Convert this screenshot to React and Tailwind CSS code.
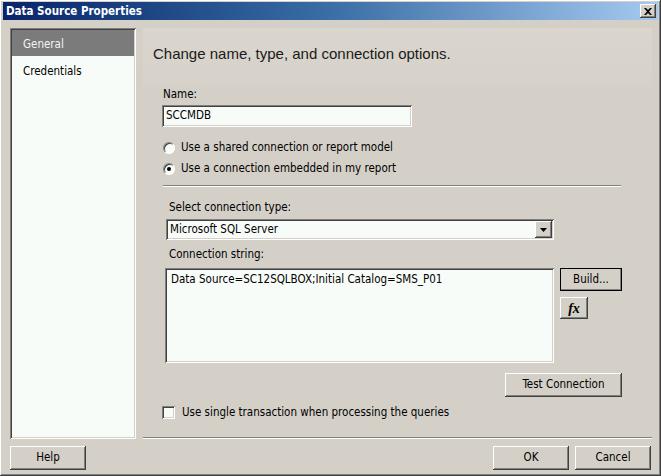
import React from 'react';

const raised =
  'bg-[#d4d0c8] shadow-[inset_-1px_-1px_#404040,inset_1px_1px_#ffffff,inset_-2px_-2px_#808080,inset_2px_2px_#d4d0c8]';
const sunken =
  'bg-[#f8fcf8] shadow-[inset_1px_1px_#808080,inset_-1px_-1px_#ffffff,inset_2px_2px_#404040,inset_-2px_-2px_#d4d0c8]';

function Button({ children, className = '', primary = false }) {
  return (
    <button
      className={`${raised} ${primary ? 'outline outline-1 outline-black -outline-offset-1' : ''} flex items-center justify-center text-black ${className}`}
    >
      {children}
    </button>
  );
}

function Radio({ checked, label }) {
  return (
    <label className="flex items-center h-[21px]">
      <span className="w-[12px] h-[12px] rounded-full bg-[#f8fcf8] border border-t-[#808080] border-l-[#808080] border-b-white border-r-white flex items-center justify-center shadow-[inset_1px_1px_#404040]">
        {checked && <span className="w-[4px] h-[4px] rounded-full bg-black" />}
      </span>
      <span className="ml-[6px] pt-[1px]">{label}</span>
    </label>
  );
}

export default function App() {
  return (
    <div className="w-[661px] h-[476px] bg-[#d4d0c8] flex flex-col overflow-hidden font-['DejaVu_Sans_Condensed','Liberation_Sans',sans-serif] text-[11.5px] text-black shadow-[inset_-1px_-1px_#404040,inset_1px_1px_#ffffff,inset_-2px_-2px_#808080]">
      {/* title bar */}
      <div className="mx-[3px] mt-[2px] h-[18px] bg-gradient-to-r from-[#0a246a] via-[#3a6ea5] to-[#a6caf0] flex items-center justify-between pl-[3px] pr-[2px]">
        <span className="text-white font-bold text-[11.5px] pt-[1px]">Data Source Properties</span>
        <span className={`${raised} w-[16px] h-[14px] flex items-center justify-center`}>
          <svg width="8" height="7" viewBox="0 0 8 7">
            <path d="M0 0h2l2 2 2-2h2L5 3.5 8 7H6L4 5 2 7H0l3-3.5z" fill="#000" />
          </svg>
        </span>
      </div>

      {/* body */}
      <div className="flex flex-1 pt-[8px] pl-[10px]">
        {/* left nav */}
        <div className={`${sunken} w-[126px] h-[411px] p-[2px]`}>
          <div className="h-[26px] bg-[#7b7b7b] text-[#f4f4f4] flex items-center pl-[11px] pt-[4px]">General</div>
          <div className="h-[28px] flex items-center pl-[11px] pt-[4px]">Credentials</div>
        </div>

        {/* right column */}
        <div className="flex-1 ml-[7px] mr-[9px] flex flex-col">
          <div className="h-[59px] bg-gradient-to-b from-[#dad6ce] to-[#d6d2ca] pl-[10px] pb-[7px] flex items-center">
            <span className="text-[15px] text-[#1a1a1a] font-['Liberation_Sans',sans-serif]">Change name, type, and connection options.</span>
          </div>

          <div className="pl-[20px] flex flex-col">
            <div className="mt-[1px] h-[14px] flex items-center">Name:</div>
            <div className={`${sunken} mt-[3px] -ml-[1px] w-[250px] h-[22px] flex items-center pl-[4px]`}>SCCMDB</div>

            <div className="mt-[10px] flex flex-col">
              <Radio label="Use a shared connection or report model" />
              <Radio checked label="Use a connection embedded in my report" />
            </div>

            <div className="mt-[6px] w-[458px] h-[2px] border-t border-t-[#808080] border-b border-b-white" />

            <div className="pl-[3px] flex flex-col">
              <div className="mt-[14px] h-[14px] flex items-center pl-[3px]">Select connection type:</div>
              <div className={`${sunken} mt-[4px] w-[388px] h-[21px] flex items-center justify-between pl-[4px] pr-[2px]`}>
                <span>Microsoft SQL Server</span>
                <span className={`${raised} w-[17px] h-[17px] flex items-center justify-center`}>
                  <svg width="7" height="4" viewBox="0 0 7 4">
                    <path d="M0 0h7L3.5 4z" fill="#000" />
                  </svg>
                </span>
              </div>

              <div className="mt-[8px] h-[14px] flex items-center pl-[3px]">Connection string:</div>
              <div className="mt-[6px] flex">
                <div className={`${sunken} -ml-[1px] w-[389px] h-[95px] pl-[6px] pt-[3px]`}>
                  Data Source=SC12SQLBOX;Initial Catalog=SMS_P01
                </div>
                <div className="ml-[6px] flex flex-col">
                  <Button primary className="w-[62px] h-[23px]">Build...</Button>
                  <Button className="mt-[6px] w-[28px] h-[22px] font-['Liberation_Serif',serif] italic font-bold text-[14px]">
                    fx
                  </Button>
                </div>
              </div>

              <div className="mt-[10px] flex justify-end w-[456px]">
                <Button className="w-[117px] h-[24px]">Test Connection</Button>
              </div>
            </div>

            <label className="mt-[9px] flex items-center h-[13px] -ml-[1px]">
              <span className="w-[13px] h-[13px] bg-[#f8fcf8] shadow-[inset_1px_1px_#808080,inset_-1px_-1px_#ffffff,inset_2px_2px_#404040,inset_-2px_-2px_#d4d0c8]" />
              <span className="ml-[7px] pt-[1px]">Use single transaction when processing the queries</span>
            </label>
          </div>

          <div className="mt-auto h-[2px] border-t border-t-[#808080] border-b border-b-white" />
        </div>
      </div>

      {/* footer */}
      <div className="h-[38px] flex items-start pt-[7px] pl-[10px] pr-[10px]">
        <Button className="w-[76px] h-[24px]">Help</Button>
        <div className="ml-auto flex gap-[6px]">
          <Button className="w-[76px] h-[24px]">OK</Button>
          <Button className="w-[76px] h-[24px]">Cancel</Button>
        </div>
      </div>
    </div>
  );
}
